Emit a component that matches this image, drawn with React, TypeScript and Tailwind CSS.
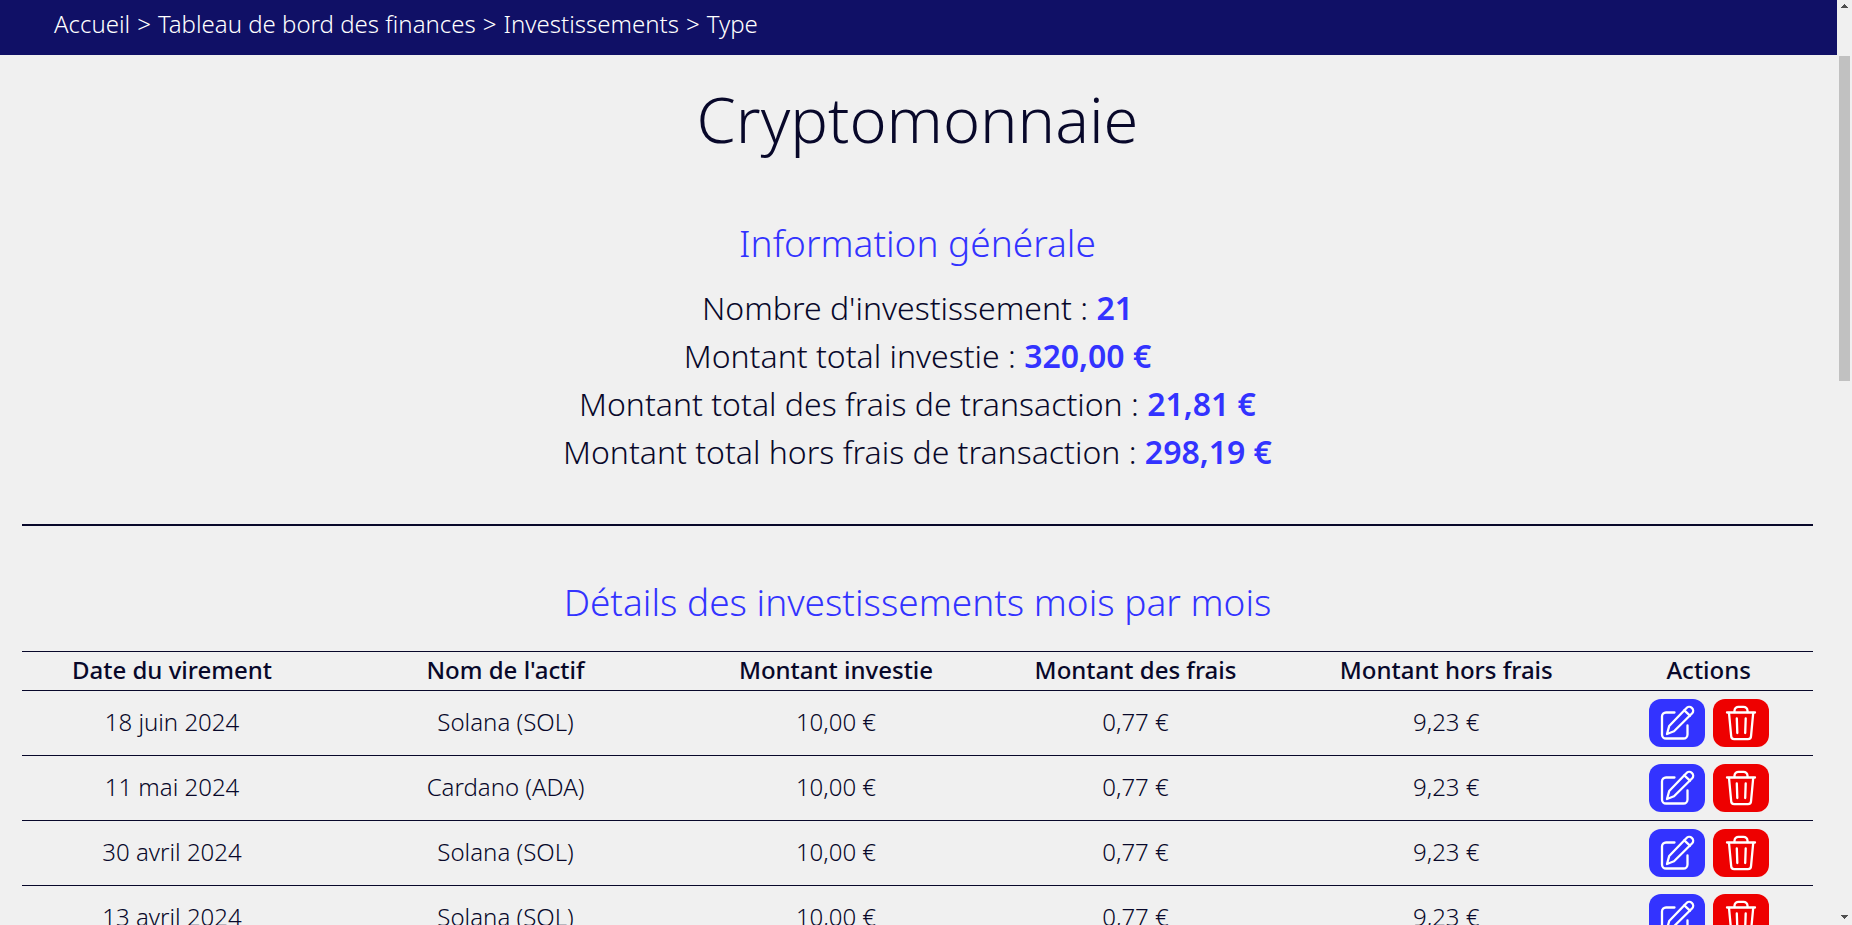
import { Fragment } from "react";

type Investment = {
  date: string;
  asset: string;
  amount: string;
  fees: string;
  net: string;
};

const breadcrumb = ["Accueil", "Tableau de bord des finances", "Investissements", "Type"];

const summary = [
  { label: "Nombre d'investissement", value: "21" },
  { label: "Montant total investie", value: "320,00 €" },
  { label: "Montant total des frais de transaction", value: "21,81 €" },
  { label: "Montant total hors frais de transaction", value: "298,19 €" },
];

const columns = [
  { title: "Date du virement", width: "w-[16.75%]" },
  { title: "Nom de l'actif", width: "w-[20.5%]" },
  { title: "Montant investie", width: "w-[16.4%]" },
  { title: "Montant des frais", width: "w-[17.05%]" },
  { title: "Montant hors frais", width: "w-[17.65%]" },
  { title: "Actions", width: "w-[11.65%]" },
];

const investments: Investment[] = [
  { date: "18 juin 2024", asset: "Solana (SOL)", amount: "10,00 €", fees: "0,77 €", net: "9,23 €" },
  { date: "11 mai 2024", asset: "Cardano (ADA)", amount: "10,00 €", fees: "0,77 €", net: "9,23 €" },
  { date: "30 avril 2024", asset: "Solana (SOL)", amount: "10,00 €", fees: "0,77 €", net: "9,23 €" },
  { date: "13 avril 2024", asset: "Solana (SOL)", amount: "10,00 €", fees: "0,77 €", net: "9,23 €" },
];

function EditIcon() {
  return (
    <svg
      viewBox="0 0 36 36"
      className="size-9"
      fill="none"
      stroke="currentColor"
      strokeWidth="2.3"
      strokeLinecap="round"
      strokeLinejoin="round"
      aria-hidden="true"
    >
      <path d="M15.500 7.500H7A4 4 0 0 0 3 11.500V29.500A4 4 0 0 0 7 33.500H24.500A4 4 0 0 0 28.500 29.500V20.500" />
      <path d="M27.300 3.200A3.700 3.700 0 0 1 33.200 8.300L15 26.300L8 29L10.200 21Z" />
      <path d="M25.300 5.400L31 10.700" />
    </svg>
  );
}

function TrashIcon() {
  return (
    <svg
      viewBox="0 0 36 36"
      className="size-9"
      fill="none"
      stroke="currentColor"
      strokeWidth="2.3"
      strokeLinecap="round"
      strokeLinejoin="round"
      aria-hidden="true"
    >
      <path d="M4 7.500H32" />
      <path d="M11.500 7V5.500A4 4 0 0 1 15.500 1.800H20.500A4 4 0 0 1 24.500 5.500V7" />
      <path d="M6 8L8.200 31.300A3 3 0 0 0 11.200 34.200H25A3 3 0 0 0 28 31.300L30.200 8" />
      <path d="M13.800 13.500L14.300 28M22.700 13.500L22.200 28" />
    </svg>
  );
}

function ScrollRail() {
  return (
    <div className="flex w-[15px] shrink-0 flex-col bg-[#f0f0f0] px-0.5" aria-hidden="true">
      <svg viewBox="0 0 11 14" className="h-14 w-full" fill="#505050" preserveAspectRatio="xMidYMin meet">
        <path d="M5 4h1v1h1v1h1v1h1v1H2V7h1V6h1V5h1z" />
      </svg>
      <div className="h-[325px] bg-[#c1c1c1]" />
      <svg viewBox="0 0 11 14" className="mt-auto h-[14px] w-full" fill="#505050">
        <path d="M2 4h7v1H8v1H7v1H6v1H5V7H4V6H3V5H2z" />
      </svg>
    </div>
  );
}

export default function App() {
  return (
    <div className="flex h-screen overflow-hidden bg-[#f0f0f0] font-['Noto_Sans',sans-serif] font-light text-[#08082a]">
      <div className="min-w-0 flex-1 overflow-hidden">
        <header className="bg-[#101066] px-[54px] pt-2 pb-[15px] text-white">
          <nav aria-label="Fil d'Ariane" className="flex gap-[7px] text-2xl">
            {breadcrumb.map((item, index) => (
              <Fragment key={item}>
                {index > 0 && <span>&gt;</span>}
                <a href="#">{item}</a>
              </Fragment>
            ))}
          </nav>
        </header>

        <main className="pt-6 pr-6 pl-[22px] text-center">
          <h1 className="text-[63px] leading-[80px]">Cryptomonnaie</h1>

          <section className="mt-14">
            <h2 className="text-[37px] leading-[56px] text-[#3333ff]">Information générale</h2>
            <div className="mt-[13px] text-[32px] leading-[48px]">
              {summary.map(({ label, value }) => (
                <p key={label}>
                  {label} : <strong className="font-semibold text-[#3333ff]">{value}</strong>
                </p>
              ))}
            </div>
          </section>

          <hr className="mt-12 border-t-2 border-[#08082a]" />

          <section className="mt-12">
            <h2 className="text-[37px] leading-[56px] text-[#3333ff]">
              Détails des investissements mois par mois
            </h2>
            <table className="mt-[21px] w-full table-fixed border-collapse text-2xl">
              <thead>
                <tr className="border-y border-[#08082a]">
                  {columns.map(({ title, width }) => (
                    <th key={title} scope="col" className={`${width} pt-0.5 pb-1 font-medium`}>
                      {title}
                    </th>
                  ))}
                </tr>
              </thead>
              <tbody>
                {investments.map((row) => (
                  <tr key={row.date} className="border-b border-[#08082a]">
                    <td className="pb-0.5">{row.date}</td>
                    <td className="pb-0.5">{row.asset}</td>
                    <td className="pb-0.5">{row.amount}</td>
                    <td className="pb-0.5">{row.fees}</td>
                    <td className="pb-0.5">{row.net}</td>
                    <td className="py-2">
                      <div className="flex justify-center gap-2 text-white">
                        <button
                          type="button"
                          aria-label="Modifier"
                          className="flex h-12 w-14 items-center justify-center rounded-xl bg-[#3333ff]"
                        >
                          <EditIcon />
                        </button>
                        <button
                          type="button"
                          aria-label="Supprimer"
                          className="flex h-12 w-14 items-center justify-center rounded-xl bg-[#ee0000]"
                        >
                          <TrashIcon />
                        </button>
                      </div>
                    </td>
                  </tr>
                ))}
              </tbody>
            </table>
          </section>
        </main>
      </div>
      <ScrollRail />
    </div>
  );
}
